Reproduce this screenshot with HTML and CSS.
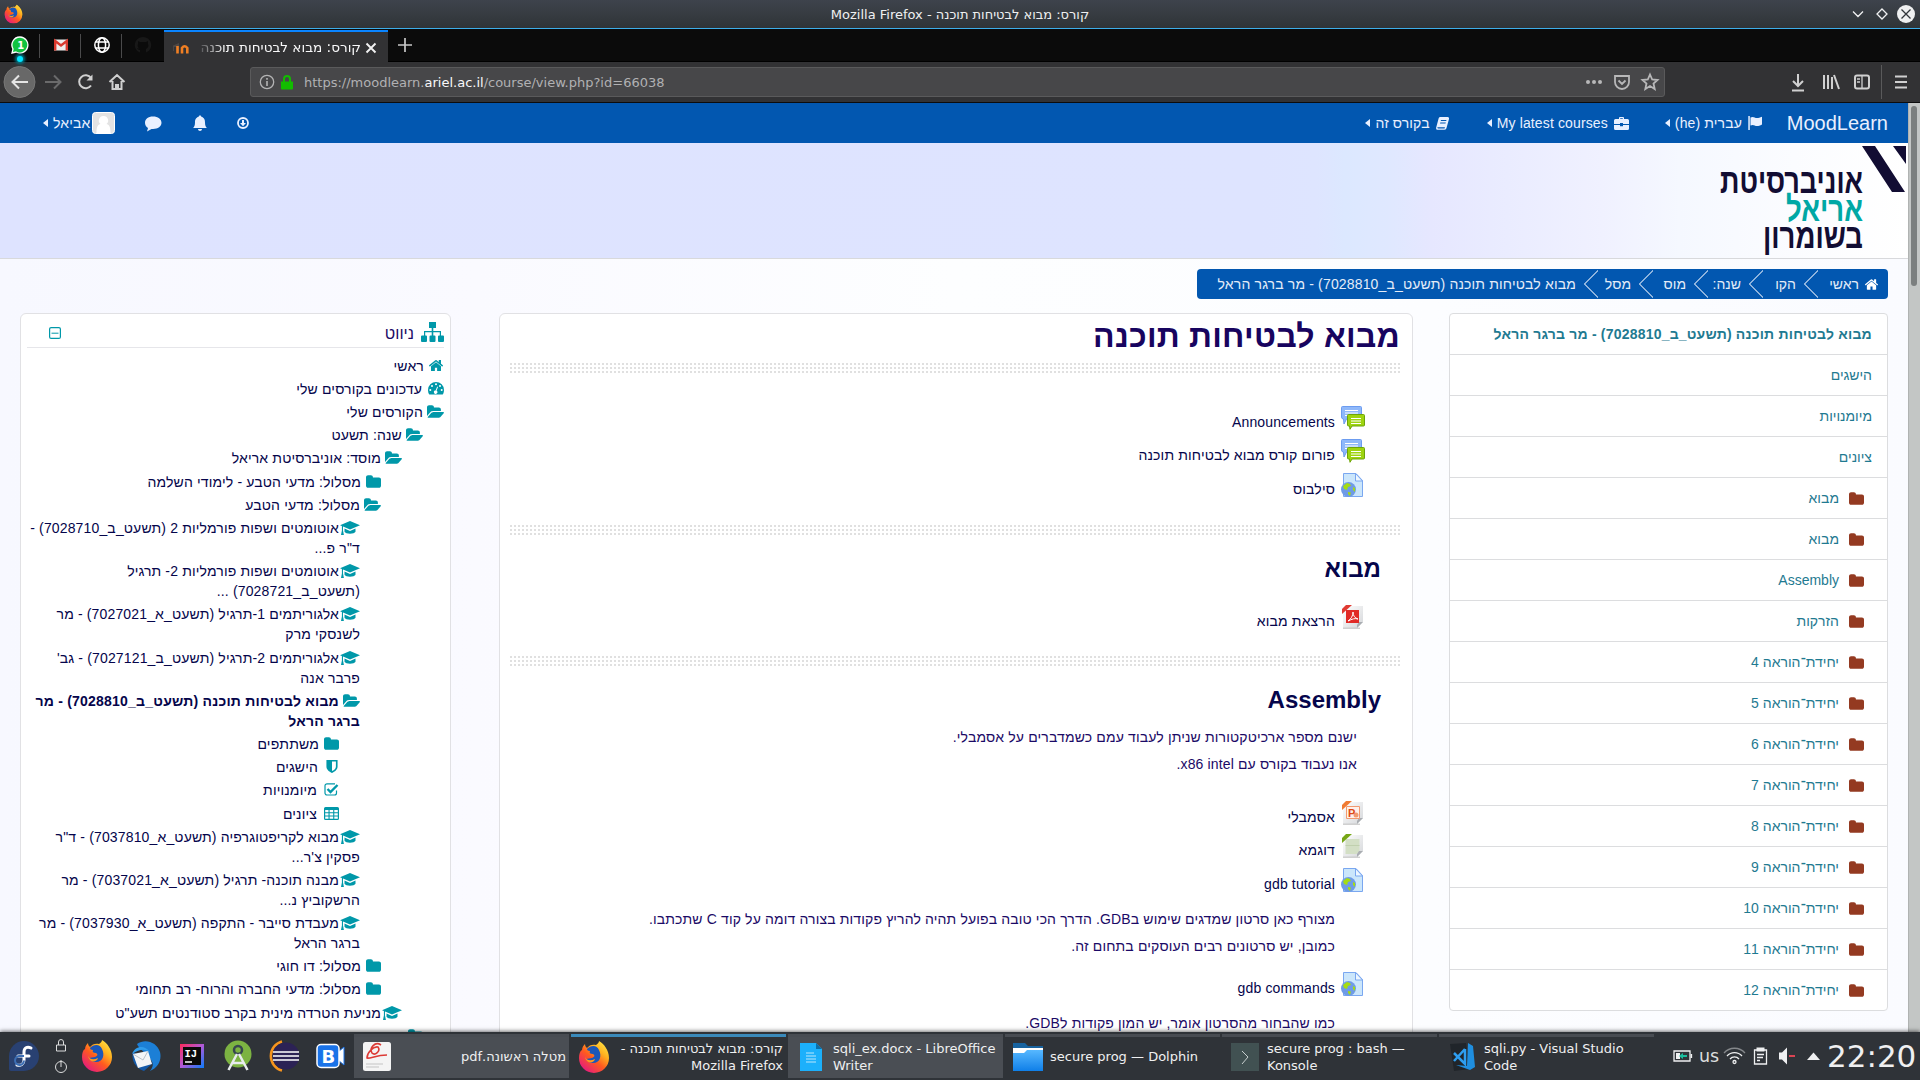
FILE: index.html
```html
<!DOCTYPE html>
<html lang="he">
<head>
<meta charset="utf-8">
<title>קורס: מבוא לבטיחות תוכנה</title>
<link rel="stylesheet" href="styles.css">
</head>
<body>
<svg class="sprite" aria-hidden="true">
  <defs>
    <linearGradient id="ffx" x1="1" y1="0" x2="0.2" y2="1"><stop offset="0" stop-color="#fff44f"/><stop offset=".35" stop-color="#ffb01f"/><stop offset=".6" stop-color="#ff5a1f"/><stop offset="1" stop-color="#e31587"/></linearGradient>
    <linearGradient id="doc" x1="0" y1="0" x2="1" y2="1"><stop offset="0" stop-color="#fff"/><stop offset="1" stop-color="#d5d7da"/></linearGradient>
    <linearGradient id="fold" x1="0" y1="0" x2="0" y2="1"><stop offset="0" stop-color="#57b8ff"/><stop offset="1" stop-color="#0f7fe8"/></linearGradient>
    <linearGradient id="ij" x1="0" y1="0" x2="1" y2="1"><stop offset="0" stop-color="#fe2857"/><stop offset=".5" stop-color="#b05ad8"/><stop offset="1" stop-color="#087cfa"/></linearGradient>
  </defs>
  <symbol id="folder" viewBox="64 128 1664 1408"><path d="M1728 608v704q0 92-66 158t-158 66h-1216q-92 0-158-66t-66-158v-960q0-92 66-158t158-66h320q92 0 158 66t66 158v32h672q92 0 158 66t66 158z"/></symbol>
  <symbol id="open" viewBox="0 128 1880 1408"><path d="M1879 952q0 31-31 66l-336 396q-43 51-120.500 86.500t-143.500 35.500h-1088q-34 0-60.500-13t-26.500-43q0-31 31-66l336-396q43-51 120.500-86.500t143.500-35.500h1088q34 0 60.500 13t26.500 43zm-343-344v160h-832q-94 0-197 47.500t-164 119.500l-337 396-5 6q0-4-.5-12.500t-.5-12.500v-960q0-92 66-158t158-66h320q92 0 158 66t66 158v32h544q92 0 158 66t66 158z"/></symbol>
  <symbol id="home" viewBox="90 250 1612 1290"><path d="M1472 992v480q0 26-19 45t-45 19h-384v-384h-256v384h-384q-26 0-45-19t-19-45v-480q0-1 .5-3t.5-3l575-474 575 474q1 2 1 6zm223-69l-62 74q-8 9-21 11h-3q-13 0-21-7l-692-577-692 577q-12 8-24 7-13-2-21-11l-62-74q-8-10-7-23.500t11-21.500l719-599q32-26 76-26t76 26l244 204v-195q0-14 9-23t23-9h192q14 0 23 9t9 23v408l219 182q10 8 11 21.500t-7 23.500z"/></symbol>
  <symbol id="cap" viewBox="0 0 20 14"><path d="M0 4.300 10 0l10 4.300-10 4.200-7-2.900v3.900l.9 4.500H1l.9-4.500V5.100z"/><path d="M4.500 7.600 10 9.900l5.500-2.300v3.200c-1 2.600-10 2.600-11 0z"/></symbol>
  <symbol id="dash" viewBox="0 0 16 13"><path fill-rule="evenodd" d="M8 0a8 8 0 0 1 8 8c0 1.800-.5 3.500-1.300 4.600H1.300A8 8 0 0 1 0 8a8 8 0 0 1 8-8zM8 1.300a1 1 0 1 0 0 2 1 1 0 0 0 0-2zM4 3a1 1 0 1 0 0 2 1 1 0 0 0 0-2zm8 0a1 1 0 1 0 0 2 1 1 0 0 0 0-2zM2.300 7a1 1 0 1 0 0 2 1 1 0 0 0 0-2zm11.400 0a1 1 0 1 0 0 2 1 1 0 0 0 0-2zM9.200 4.600 7.600 8.400a1.700 1.700 0 1 0 1 .3l1.400-3.800z"/></symbol>
  <symbol id="site" viewBox="0 0 23 20"><path d="M8 0h7v6h-2.700v3H20v4.500h2a1 1 0 0 1 1 1V19a1 1 0 0 1-1 1h-4a1 1 0 0 1-1-1v-4.500a1 1 0 0 1 1-1h.8V10.200h-6.500v3.300h1.200a1 1 0 0 1 1 1V19a1 1 0 0 1-1 1h-4a1 1 0 0 1-1-1v-4.500a1 1 0 0 1 1-1h1.200v-3.300H4.200v3.300H5a1 1 0 0 1 1 1V19a1 1 0 0 1-1 1H1a1 1 0 0 1-1-1v-4.500a1 1 0 0 1 1-1h2V9h7.700V6H8z"/></symbol>
  <symbol id="shield" viewBox="0 0 12 14"><path fill-rule="evenodd" d="M0 0h12v7c0 3.500-3 5.500-6 7-3-1.500-6-3.500-6-7zm6 1.700v10.200c2.500-1.300 4.200-2.700 4.200-5V1.700z"/></symbol>
  <symbol id="check" viewBox="0 0 15 13"><path d="M11 .8H3A2 2 0 0 0 1 2.800v7A2 2 0 0 0 3 12h7.500a2 2 0 0 0 2-2V7.500" fill="none" stroke="currentColor" stroke-width="1.200"/><path d="m3.500 6 3 3 7-7" fill="none" stroke="currentColor" stroke-width="2.400"/></symbol>
  <symbol id="table" viewBox="0 0 15 13"><path fill-rule="evenodd" d="M1.500 0h12A1.500 1.500 0 0 1 15 1.500v10a1.500 1.500 0 0 1-1.500 1.500h-12A1.500 1.500 0 0 1 0 11.500v-10A1.500 1.500 0 0 1 1.500 0zM1.200 3v2.300h3.300V3zm4.400 0v2.300h3.600V3zm4.700 0v2.300h3.500V3zM1.200 6.300v2.200h3.300V6.300zm4.400 0v2.200h3.600V6.300zm4.700 0v2.200h3.500V6.300zM1.200 9.500v2.300h3.300V9.500zm4.400 0v2.300h3.600V9.500zm4.700 0v2.300h3.500V9.500z"/></symbol>
  <symbol id="forum" viewBox="0 0 24 24"><path d="M1.500.5h18a1 1 0 0 1 1 1V12a1 1 0 0 1-1 1H5.500l-2.500 5-.5-5a2 2 0 0 1-2-2V1.500a1 1 0 0 1 1-1z" fill="#8fb8fa" stroke="#6c9cf0"/><path d="M4 4.500h13M4 7h13M4 9.500h5" stroke="#fff"/><path d="M7.500 8.500h15a1 1 0 0 1 1 1V19a1 1 0 0 1-1 1H11l-2 3.300L8.500 20h-1a1 1 0 0 1-1-1V9.500a1 1 0 0 1 1-1z" fill="#9ed410" stroke="#6da409"/><path d="M10 12.500h10M10 15h10M10 17.500h10" stroke="#fff" /></symbol>
  <symbol id="url" viewBox="0 0 24 24"><path d="M2.500.5H15l6.500 7v16h-19z" fill="#cbe6fb" stroke="#7aa7f0"/><path d="M14.500.5v7.500h7z" fill="#eef7ff" stroke="#7aa7f0"/><circle cx="7.500" cy="16.500" r="7.500" fill="#6f9be6"/><path d="M2 13l4-3 3 1 1 2-3 1-1 3-3-1zM7 19l3 .5-1 3.500-2-2zM12 14l2 1v4l-2-2z" fill="#a5dc12"/></symbol>
  <symbol id="pdf" viewBox="0 0 24 24"><path d="M2 1h20v16l-6 6H2z" fill="url(#doc)"/><path d="M2 23.200h17" stroke="#bbb"/><path d="M22 17l-6 6v-3l2-3z" fill="#aaadb2"/><path d="M1 9V4l4-4h6z" fill="#e03b33"/><path d="M5 5h13v13H5z" fill="#e12a26"/><path d="M7 16c3-2 5-5 5-9 0 4 2 6 5 7-3-1-6 0-10 2z" fill="none" stroke="#fff"/></symbol>
  <symbol id="xls" viewBox="0 0 24 24"><path d="M2 1h20v16l-6 6H2z" fill="url(#doc)"/><path d="M2 23.200h17" stroke="#bbb"/><path d="M4.500 5h14v12l-3 3h-11z" fill="#d3dfc5"/><path d="M4.500 11.500h14" stroke="#c0d0ae"/><path d="M22 17l-6 6v-3l2-3z" fill="#aaadb2"/><path d="M1 9V4l4-4h6z" fill="#76a616"/></symbol>
  <symbol id="firefox" viewBox="0 0 32 32"><path d="M4 9c0-3 2-5 3-6 0 2 1 3 2 4 2-3 6-4 9-3C20 3 21 1 21 0c5 3 10 9 10 17a15 15 0 0 1-30 0C1 13 2 10 4 9z" fill="url(#ffx)"/><path d="M9 8c4-4 10-4 12 1 3 6 1 13-6 13-4 0-6-2-7-4l6-1c3-1 3-3 1-4-3 0-4-1-3-3-2 0-3-1-3-2z" fill="#1b57b8"/><path d="M7 16c2 4 6 4 10 2-1 4-8 6-10-2z" fill="#ff9a1f"/></symbol>
</svg>

<header class="titlebar">
  <svg class="tb-app" viewBox="0 0 32 32"><use href="#firefox"/></svg>
  <span class="tb-title" dir="ltr"><bdi>Mozilla Firefox</bdi> - <bdi>קורס: מבוא לבטיחות תוכנה</bdi></span>
  <svg class="tb-btns" viewBox="0 0 72 28" fill="none" stroke="#eff0f1" stroke-width="1.300"><path d="m5 11.500 5 5 5-5M34 9l5 5-5 5-5-5z"/><circle cx="58" cy="14" r="9" fill="#eff0f1" stroke="none"/><path d="m53.500 9.500 9 9m0-9-9 9" stroke="#30353a"/></svg>
</header>

<div class="tabs">
  <div class="pin first"><svg viewBox="0 0 18 18"><path d="M9 1a8 8 0 1 1-4 15l-4 1 1-4A8 8 0 0 1 9 1z" fill="#10c340" stroke="#fff" stroke-width="1.300"/><text x="6.300" y="13" font-family="DejaVu Sans" font-weight="700" font-size="10" fill="#fff">1</text></svg><i class="notice"></i></div>
  <div class="pin"><svg viewBox="0 0 18 18"><path d="M2 3.500h14v11H2z" fill="#eee"/><path d="M3.200 14.500V5L9 9.500 14.800 5v9.500" fill="none" stroke="#d93a2f" stroke-width="2.400"/></svg></div>
  <div class="pin"><svg viewBox="0 0 18 18" fill="none" stroke="#fff" stroke-width="1.500"><circle cx="9" cy="9" r="7.200"/><ellipse cx="9" cy="9" rx="3.600" ry="7.200"/><path d="M2.500 6h13M2.500 12h13"/></svg></div>
  <div class="pin last"><svg viewBox="0 0 18 18"><path d="M9 1a8 8 0 0 0-3 15.500V14c-2 0-2-1-3-2 2 0 2 1 3 1-2-1-3-3-2-5V5l2 1h6l2-1v3c1 2 0 4-2 5v3.500A8 8 0 0 0 9 1z" fill="#181818"/></svg></div>
  <div class="tab">
    <svg class="fav" viewBox="0 0 16 16"><path d="M0 5.500 6 3v8H4V7H1v4H0z" fill="#4c4644"/><path d="M4.500 13.500V6M9 13.500V8q2.500-3.500 5.300 0v5.500" fill="none" stroke="#f07f23" stroke-width="2.600"/></svg>
    <span class="tab-title" dir="rtl">קורס: מבוא לבטיחות תוכנה</span>
    <svg class="tab-x" viewBox="0 0 12 12"><path d="m1.500 1.500 9 9m0-9-9 9" stroke="#f2f2f2" stroke-width="1.900"/></svg>
  </div>
  <svg class="plus" viewBox="0 0 14 14"><path d="M7 0v14M0 7h14" stroke="#c8c8c8" stroke-width="1.700"/></svg>
</div>

<div class="toolbar">
  <svg class="nav-ic" viewBox="0 0 130 40" fill="none" stroke="#d0d0d0" stroke-width="2"><circle cx="19.500" cy="20" r="15.500" fill="#686868" stroke="#777" stroke-width="1"/><path d="M28 20H13m6-6.500L12.500 20l6.500 6.500" stroke="#e4e4e4"/><path d="M45 20h15m-6-6.500 6.500 6.500-6.500 6.500" stroke="#6a6a6b"/><path d="M91 23.500a6.500 6.500 0 1 1 0-7.500"/><path d="M92.500 12.500v6h-6z" fill="#d0d0d0" stroke="none"/><path d="m109.500 20 7.500-7 7.500 7M112.500 19v8h9v-8M116 27v-4h2v4"/></svg>
  <div class="urlbar">
    <svg class="info" viewBox="0 0 16 16" fill="none" stroke="#b4b4b5"><circle cx="8" cy="8" r="6.700" stroke-width="1.300"/><path d="M8 7v5M8 4v1.700" stroke-width="1.600"/></svg>
    <svg class="lock" viewBox="0 0 12 15"><path d="M3 7V4a3 3 0 0 1 6 0v3" fill="none" stroke="#12bc00" stroke-width="2"/><path d="M0 6.500h12v7a1 1 0 0 1-1 1H1a1 1 0 0 1-1-1z" fill="#12bc00"/></svg>
    <span class="url">https://moodlearn.<b>ariel.ac.il</b>/course/view.php?id=66038</span>
    <svg class="url-ic" viewBox="0 0 80 20" fill="none" stroke="#b8b8b9" stroke-width="1.800"><g fill="#b8b8b9" stroke="none"><circle cx="8" cy="10" r="2"/><circle cx="14" cy="10" r="2"/><circle cx="20" cy="10" r="2"/></g><path d="M35 4h14v6a7 7 0 0 1-14 0zM38.500 8.500 42 12l3.500-3.500"/><path d="m70 2.500 2.200 5 5.300.5-4 3.500 1.200 5.500-4.700-3-4.700 3 1.200-5.500-4-3.500 5.300-.5z"/></svg>
  </div>
  <svg class="tool-ic" viewBox="0 0 130 40" fill="none" stroke="#d0d0d0" stroke-width="2"><path d="M18 12v12m-5-5 5 5 5-5M12 28.500h12"/><path d="M44 13v14M48 13v14M52 15v12M54 13l5 14"/><rect x="75" y="13.500" width="14" height="13" rx="2"/><path d="M82 14v12M77 17h3m-3 3h3" stroke-width="1.300"/><path d="M101.500 3v34" stroke="#5a5a5b" stroke-width="1"/><path d="M115 14.500h12m-12 5.500h12m-12 5.500h12"/></svg>
</div>

<div class="viewport">
<div class="page" dir="rtl">
  <nav class="navbar">
    <a class="brand">MoodLearn</a>
    <a class="menu m1"><svg width="14" height="14" viewBox="0 0 14 14"><path d="M.3 0h1.500v14H.3zM2.500 1.500c3-1.500 4 .5 6.500.5 1.500 0 3-.5 5-1.300v7.800c-2 1-3.500 1.500-5 1.500C6.500 10 5.500 8 2.500 9.500z"/></svg>עברית (he)<i></i></a>
    <a class="menu m2"><svg width="15" height="13" viewBox="0 0 15 13"><path fill-rule="evenodd" d="M5 2V1a1 1 0 0 1 1-1h3a1 1 0 0 1 1 1v1h3.500A1.500 1.500 0 0 1 15 3.500V7H9V6H6v1H0V3.500A1.500 1.500 0 0 1 1.500 2zm1.200 0h2.600V1.200H6.200zM0 8h6v1.300h3V8h6v3.500a1.500 1.500 0 0 1-1.500 1.500h-12A1.500 1.500 0 0 1 0 11.500z"/></svg>My latest courses<i></i></a>
    <a class="menu m3"><svg width="13" height="13" viewBox="0 0 13 13"><path fill-rule="evenodd" d="M4 0h7.500A1.500 1.500 0 0 1 13 2l-2.500 9a2 2 0 0 1-2 1.800H1.700C.4 12.800-.2 11.500.2 10.500L2.600 1.500A2 2 0 0 1 4 0zM5 3l-.3 1h5.500l.3-1zm-.7 2.500L4 6.500h5.500l.3-1zM1.500 10.300c-.3.800.1 1.200.7 1.200h6.300l.5-1.200z"/></svg>בקורס זה<i></i></a>
    <span class="grow"></span>
    <svg class="user-ic" width="106" height="18" viewBox="0 0 106 18" fill="#e9f0ff"><path d="M9 2.500c5 0 8.500 2.700 8.500 6.300S14 15 9 15H7.500L3 17.500l1-3.500C2 12.800 1 11 1 8.800 1 5.200 4 2.500 9 2.500z"/><path d="M56 1.500c.8 0 1.300.5 1.300 1.300 3 .8 3.700 3.200 3.700 5.700 0 3 .8 4.500 2 5.500H49c1.200-1 2-2.500 2-5.500 0-2.500.7-4.900 3.700-5.700 0-.8.500-1.300 1.300-1.300zM54 15h4c0 2.500-4 2.500-4 0z"/><circle cx="99" cy="9" r="5" fill="none" stroke="#e9f0ff" stroke-width="1.800"/><path d="M98 6h2v3h2l-3 3.200L96 9h2z"/></svg>
    <a class="menu user"><svg width="23" height="22" viewBox="0 0 23 22"><rect x=".5" y=".5" width="22" height="21" rx="3" fill="#e3e3e3" stroke="#fff"/><path d="M11.500 4a4.500 4.500 0 0 1 3 8c2.500.8 4 2 4 9h-14c0-7 1.500-8.200 4-9a4.500 4.500 0 0 1 3-8z" fill="#fff"/></svg>אביאל<i></i></a>
  </nav>

  <div class="banner">
    <svg class="logo" width="190" height="112" viewBox="0 0 190 112"><path d="M146 1h13l30 46h-13zM177 1h13v18z" fill="#120d33"/><g class="logo-text" direction="rtl"><text x="147" y="48" textLength="143" lengthAdjust="spacingAndGlyphs">אוניברסיטת</text><text class="teal" x="147" y="75.500" textLength="77" lengthAdjust="spacingAndGlyphs">אריאל</text><text x="147" y="103" textLength="100" lengthAdjust="spacingAndGlyphs">בשומרון</text></g></svg>
  </div>

  <div class="crumbs">
    <span class="c0"><svg width="13" height="11" fill="#fff"><use href="#home"/></svg>ראשי</span>
    <span class="c">הקו</span><span class="c">שנה:</span><span class="c">מוס</span><span class="c">מסל</span><span class="c wide">מבוא לבטיחות תוכנה (תשעט_ב_7028810) - מר ברגר הראל</span>
  </div>

  <div class="cols">
    <aside class="menu-box">
      <div class="mi b">מבוא לבטיחות תוכנה (תשעט_ב_7028810) - מר ברגר הראל</div>
      <div class="mi">הישגים</div><div class="mi">מיומנויות</div><div class="mi">ציונים</div>
      <div class="mi f"><svg><use href="#folder"/></svg>מבוא</div>
      <div class="mi f"><svg><use href="#folder"/></svg>מבוא</div>
      <div class="mi f"><svg><use href="#folder"/></svg>Assembly</div>
      <div class="mi f"><svg><use href="#folder"/></svg>הזרקות</div>
      <div class="mi f"><svg><use href="#folder"/></svg>יחידת־הוראה 4</div>
      <div class="mi f"><svg><use href="#folder"/></svg>יחידת־הוראה 5</div>
      <div class="mi f"><svg><use href="#folder"/></svg>יחידת־הוראה 6</div>
      <div class="mi f"><svg><use href="#folder"/></svg>יחידת־הוראה 7</div>
      <div class="mi f"><svg><use href="#folder"/></svg>יחידת־הוראה 8</div>
      <div class="mi f"><svg><use href="#folder"/></svg>יחידת־הוראה 9</div>
      <div class="mi f"><svg><use href="#folder"/></svg>יחידת־הוראה 10</div>
      <div class="mi f"><svg><use href="#folder"/></svg>יחידת־הוראה 11</div>
      <div class="mi f"><svg><use href="#folder"/></svg>יחידת־הוראה 12</div>
    </aside>

    <main class="content">
      <h1>מבוא לבטיחות תוכנה</h1>
      <div class="dots"></div>
      <section class="s1">
        <div class="act"><svg><use href="#forum"/></svg><a>Announcements</a></div>
        <div class="act"><svg><use href="#forum"/></svg><a>פורום קורס מבוא לבטיחות תוכנה</a></div>
        <div class="act"><svg><use href="#url"/></svg><a>סילבוס</a></div>
      </section>
      <div class="dots"></div>
      <section class="s2">
        <h3>מבוא</h3>
        <div class="act"><svg><use href="#pdf"/></svg><a>הרצאת מבוא</a></div>
      </section>
      <div class="dots"></div>
      <section class="s3">
        <h3>Assembly</h3>
        <p class="sum">ישנם מספר ארכיטקטורות שניתן לעבוד עמם כשמדברים על אסמבלי.<br>אנו נעבוד בקורס עם x86 intel.</p>
        <div class="act"><svg viewBox="0 0 24 24"><path d="M2 1h20v16l-6 6H2z" fill="url(#doc)"/><path d="M2 23.200h17" stroke="#bbb"/><path d="M22 17l-6 6v-3l2-3z" fill="#aaadb2"/><path d="M1 9V4l4-4h6z" fill="#f07b33"/><path d="M5.500 5.500h13v12h-13z" fill="#fff1ea" stroke="#f29a70"/><circle cx="15" cy="14" r="2.500" fill="#f29a70"/><text x="7" y="15.500" font-family="Liberation Sans" font-weight="700" font-size="11" fill="#dd4a16">P</text></svg><a>אסמבלי</a></div>
        <div class="act"><svg><use href="#xls"/></svg><a>דוגמא</a></div>
        <div class="act"><svg><use href="#url"/></svg><a>gdb tutorial</a></div>
        <p class="note">מצורף כאן סרטון שמדגים שימוש בGDB. הדרך הכי טובה בפועל תהיה להריץ פקודות בצורה דומה על קוד C שתכתבו.<br>כמובן, יש סרטונים רבים העוסקים בתחום זה.</p>
        <div class="act"><svg><use href="#url"/></svg><a>gdb commands</a></div>
        <p class="note last">כמו שהבחור מהסרטון אומר, יש המון פקודות לGDB.</p>
      </section>
    </main>

    <aside class="tree-box">
      <div class="tree-head"><svg class="site"><use href="#site"/></svg><span>ניווט</span><svg class="minus" viewBox="0 0 12 12" fill="none" stroke="#0098a9"><rect x=".6" y=".6" width="10.800" height="10.800" rx="1.500" stroke-width="1.200"/><path d="M2.500 6.200h7"/></svg></div>
      <ul class="tree">
        <li class="l0"><svg class="i-home"><use href="#home"/></svg>ראשי</li>
        <li class="l0"><svg class="i-dash"><use href="#dash"/></svg>עדכונים בקורסים שלי</li>
        <li class="l0"><svg class="i-open"><use href="#open"/></svg>הקורסים שלי</li>
        <li class="l1"><svg class="i-open"><use href="#open"/></svg>שנה: תשעט</li>
        <li class="l2"><svg class="i-open"><use href="#open"/></svg>מוסד: אוניברסיטת אריאל</li>
        <li class="l3"><svg class="i-fold"><use href="#folder"/></svg>מסלול: מדעי הטבע - לימודי השלמה</li>
        <li class="l3"><svg class="i-open"><use href="#open"/></svg>מסלול: מדעי הטבע</li>
        <li class="l4"><svg class="i-cap"><use href="#cap"/></svg>אוטומטים ושפות פורמליות 2 (תשעט_ב_7028710) -<br>ד"ר פ...</li>
        <li class="l4"><svg class="i-cap"><use href="#cap"/></svg>אוטומטים ושפות פורמליות 2- תרגיל<br>(תשעט_ב_7028721) ...</li>
        <li class="l4"><svg class="i-cap"><use href="#cap"/></svg>אלגוריתמים 1-תרגיל (תשעט_א_7027021) - מר<br>לשנסקי מרק</li>
        <li class="l4"><svg class="i-cap"><use href="#cap"/></svg>אלגוריתמים 2-תרגיל (תשעט_ב_7027121) - גב'<br>פרבר אנה</li>
        <li class="l4 cur"><svg class="i-open"><use href="#open"/></svg>מבוא לבטיחות תוכנה (תשעט_ב_7028810) - מר<br>ברגר הראל</li>
        <li class="l5"><svg class="i-fold"><use href="#folder"/></svg>משתתפים</li>
        <li class="l5"><svg class="i-shield"><use href="#shield"/></svg>הישגים</li>
        <li class="l5"><svg class="i-box"><use href="#check"/></svg>מיומנויות</li>
        <li class="l5"><svg class="i-box"><use href="#table"/></svg>ציונים</li>
        <li class="l4"><svg class="i-cap"><use href="#cap"/></svg>מבוא לקריפטוגרפיה (תשעט_א_7037810) - ד"ר<br>פסקין צ'ר...</li>
        <li class="l4"><svg class="i-cap"><use href="#cap"/></svg>מבנה תוכנה- תרגיל (תשעט_א_7037021) - מר<br>הרשקוביץ נ...</li>
        <li class="l4"><svg class="i-cap"><use href="#cap"/></svg>מעבדת סייבר - התקפה (תשעט_א_7037930) - מר<br>ברגר הראל</li>
        <li class="l3"><svg class="i-fold"><use href="#folder"/></svg>מסלול: דו חוגי</li>
        <li class="l3"><svg class="i-fold"><use href="#folder"/></svg>מסלול: מדעי החברה והרוח- רב תחומי</li>
        <li class="l2"><svg class="i-cap"><use href="#cap"/></svg>מניעת הטרדה מינית בקרב סטודנטים תשע"ט</li>
        <li class="l1"><svg class="i-fold"><use href="#folder"/></svg></li>
      </ul>
    </aside>
  </div>
</div>
<div class="scrollbar"><i></i></div>
</div>

<footer class="taskbar">
  <div class="launch">
    <svg class="fedora" viewBox="0 0 32 32"><path d="M16 1a15 15 0 1 1 0 30H3a2 2 0 0 1-2-2V16A15 15 0 0 1 16 1z" fill="#294172"/><path d="M23 8c-4-2-7 0-7 4v8c0 4-3 6-7 5M10 16h11" fill="none" stroke="#fff" stroke-width="3" stroke-linecap="round"/><path d="M16 16H12a4.500 4.500 0 1 0 4 4.500" fill="none" stroke="#3c6eb4" stroke-width="2"/></svg>
    <svg class="lockpow" viewBox="0 0 14 36" fill="none" stroke="#dcdddd"><path d="M2.500 7h9v6h-9zM4.500 7V4a2.500 2.500 0 0 1 5 0v3"/><circle cx="7" cy="29" r="5.500"/><path d="M7 22v7"/></svg>
    <svg class="ff" viewBox="0 0 32 32"><use href="#firefox"/></svg>
    <svg viewBox="0 0 32 32"><path d="M7 4c8-6 20-2 23 8 2 8-2 16-10 19 4-5 3-8 1-11L8 6z" fill="#1c7fd6"/><path d="M3 12C1 20 5 28 14 31l9-8z" fill="#1459a8"/><path d="m3 14 15-3 4 13-14 4z" fill="#f3f5f7"/><path d="m3 14 10 6 5-9" fill="none" stroke="#b9c2cb"/><path d="M2 14C5 6 14 4 20 12 14 8 8 10 2 14z" fill="#2f9ceb"/></svg>
    <svg viewBox="0 0 32 32"><path d="M4 4h24v24H4z" fill="url(#ij)"/><path d="M7 7h18v18H7z" fill="#0a0a0a"/><path d="M9 22h7" stroke="#fff" stroke-width="1.500"/><text x="8.500" y="17" font-family="Liberation Mono" font-weight="700" font-size="10.500" fill="#fff">IJ</text></svg>
    <svg viewBox="0 0 32 32"><circle cx="16" cy="14" r="13.500" fill="#7cb342"/><circle cx="16" cy="10" r="4" fill="none" stroke="#37474f" stroke-width="2.500"/><path d="M15 14 6.500 30M17 14l8.500 16M10 23h12" stroke="#e8ecee" stroke-width="2.500"/></svg>
    <svg viewBox="0 0 32 32"><path d="M14 1.500a15 15 0 0 0 0 29" fill="none" stroke="#f7941e" stroke-width="2.500"/><circle cx="18" cy="16" r="13.500" fill="#2c2255"/><path d="M5 12h26M5 16h26M5 20h26" stroke="#fff" stroke-width="1.700"/></svg>
    <svg viewBox="0 0 32 32"><path d="m24 12 6-5v18l-6-5z" fill="#fff" stroke="#1a73e8"/><rect x="3" y="4.500" width="22" height="23" rx="4" fill="#1a73e8" stroke="#fff" stroke-width="1.500"/><text x="7.500" y="22.500" font-family="DejaVu Sans" font-weight="700" font-size="18" fill="#fff">B</text></svg>
  </div>
  <div class="task on r"><svg viewBox="0 0 32 32"><rect x="2" y="1" width="28" height="29" rx="2.500" fill="#f4f4f4"/><path d="M20 4c-6-4-12 3-9 8 3 3 9-2 6-6C12 5 6 12 6 17c3 1 9-3 20-3" fill="none" stroke="#dc3a35" stroke-width="1.600"/><path d="M5 23h17M5 26h13" stroke="#d4d4d4" stroke-width="1.500"/></svg><span dir="rtl">מטלה ראשונה.pdf</span></div>
  <div class="task act-t r"><svg viewBox="0 0 32 32"><use href="#firefox"/></svg><span dir="rtl">קורס: מבוא לבטיחות תוכנה -<br>Mozilla Firefox</span></div>
  <div class="task on"><svg viewBox="0 0 32 32"><path d="M5 2h16l6 6v22H5z" fill="#1cb0fb"/><path d="M21 2l6 6h-6z" fill="#0a6ea8"/><path d="M11 12h8M11 15h10M11 18h10M11 21h10" stroke="#85d4fb" stroke-width="1.500"/></svg><span>sqli_ex.docx - LibreOffice<br>Writer</span></div>
  <div class="task"><svg viewBox="0 0 32 32"><path d="M1 2h12l3 3h15v5H1z" fill="#18639f"/><path d="M1 7h30v5H1z" fill="#fff"/><path d="M1 12h11l3-3h16v21H1z" fill="url(#fold)"/></svg><span>secure prog — Dolphin</span></div>
  <div class="task"><svg viewBox="0 0 32 32"><path d="M2 2h28v28H2z" fill="#415152"/><path d="m13 10 6 6-6 7" fill="none" stroke="#c8cfcf"/></svg><span>secure prog : bash —<br>Konsole</span></div>
  <div class="task"><svg viewBox="0 0 32 32"><path d="m4 3 16-1 4 26-16 2z" fill="#20252a"/><path d="m22 2 5 3 2 21-5 3-14-5 11 1z" fill="#1f8fe0"/><path d="M19 8v15L8 12M8 20 19 8" fill="none" stroke="#2e9ef0" stroke-width="2.500"/></svg><span>sqli.py - Visual Studio<br>Code</span></div>
  <div class="tray">
    <svg width="152" height="24" viewBox="0 0 152 24" fill="none" stroke="#eff0f1" stroke-width="1.300"><path d="M3 7h16v10H3zM20.500 10v4"/><path d="M5 9h4v6H5z" fill="#eff0f1" stroke="none"/><path d="m8 12 4-3v2h4v2h-4v2z" fill="#1abc9c" stroke="none"/><text x="28" y="18" font-family="DejaVu Sans" font-size="17.500" fill="#dcdddd" stroke="none">us</text><g transform="translate(-3 0)"><path d="M56 9a14 14 0 0 1 21 0" stroke="#85888b"/><path d="M59 12a10 10 0 0 1 15 0M62 15a6 6 0 0 1 9 0"/><circle cx="66.500" cy="18" r="1.500"/></g><path d="M83.500 6h12v14h-12zM86 10.500h7M86 13.500h6M86 16.500h3"/><path d="M85.500 3.500h8v4h-8z" fill="#eff0f1" stroke="none"/><path d="M108 8.500h3l5-5v17l-5-5h-3z" fill="#eff0f1" stroke="none"/><path d="M118 12h6" stroke="#da4453" stroke-width="2"/><path d="m136 16 6.500-7.500L149 16z" fill="#eff0f1" stroke="none"/></svg>
    <span class="clock">22:20</span>
  </div>
</footer>
</body>
</html>
```
FILE: styles.css
```css
* { box-sizing: border-box; }
body {
  margin: 0;
  width: 1920px;
  height: 1080px;
  overflow: hidden;
  display: flex;
  flex-direction: column;
  font-family: "Liberation Sans", "Noto Sans", sans-serif;
  font-size: 14px;
}
svg { display: block; flex: none; direction: ltr; letter-spacing: 0; }
.sprite { position: absolute; width: 0; height: 0; }

/* window chrome */
.titlebar, .tabs, .toolbar, .taskbar { font-family: "DejaVu Sans", sans-serif; font-size: 13px; }
.titlebar {
  height: 29px;
  flex: none;
  display: grid;
  grid-template-columns: 200px 1fr 200px;
  align-items: center;
  background: linear-gradient(#3e434c, #2f3437);
  border-bottom: 1px solid #3daee9;
  color: #eff0f1;
}
.tb-app { width: 19px; height: 20px; margin-left: 4px; }
.tb-title { text-align: center; }
.tb-btns { width: 72px; height: 28px; justify-self: end; }
.tabs {
  height: 33px;
  flex: none;
  display: flex;
  background: #0b0b0b;
  border-bottom: 1px solid #000;
}
.pin {
  position: relative;
  width: 41px;
  display: flex;
  align-items: center;
  justify-content: center;
}
.pin.first { width: 40px; }
.pin.last { width: 42px; }
.pin::after { content: ""; position: absolute; right: 0; top: 5px; height: 24px; width: 1px; background: #4a4a4b; }
.pin.last::after { display: none; }
.pin svg { width: 18px; height: 18px; }
.notice {
  position: absolute;
  left: 17px;
  bottom: -1px;
  width: 6px;
  height: 6px;
  border-radius: 50%;
  background: #00e5ff;
  box-shadow: 0 0 3px 2px #007a8a;
}
.tab {
  width: 224px;
  height: 33px;
  margin-top: 1px;
  border-top: 2px solid #0a84ff;
  background: #323234;
  color: #f9f9fa;
  display: flex;
  align-items: center;
  padding-left: 9px;
  font-size: 13.600px;
}
.fav { width: 16px; height: 16px; }
.tab-title {
  width: 172px;
  padding-bottom: 1px;
  text-align: right;
  white-space: nowrap;
  -webkit-mask-image: linear-gradient(to right, transparent 6px, #000 36px);
  mask-image: linear-gradient(to right, transparent 6px, #000 36px);
}
.tab-x { width: 12px; height: 12px; margin-left: 4px; }
.plus { width: 14px; height: 14px; margin: 9px 0 0 10px; }
.toolbar {
  height: 41px;
  flex: none;
  display: flex;
  align-items: center;
  background: #323234;
  border-bottom: 1px solid #0c0c0d;
}
.nav-ic { width: 130px; height: 40px; }
.urlbar {
  width: 1415px;
  height: 30px;
  margin-left: 120px;
  border: 1px solid #5a5a5b;
  border-radius: 3px;
  background: #474749;
  display: flex;
  align-items: center;
}
.info { width: 16px; height: 16px; margin-left: 8px; }
.lock { width: 12px; height: 15px; margin-left: 6px; }
.url { margin-left: 11px; color: #b1b1b3; flex: 1; }
.url b { font-weight: 400; color: #f9f9fa; }
.url-ic { width: 80px; height: 20px; margin-right: 4px; }
.tool-ic { width: 130px; height: 40px; margin-left: 115px; }

/* page */
.viewport { height: 929px; flex: none; display: flex; overflow: hidden; }
.page {
  width: 1908px;
  background: linear-gradient(90deg, #f7f8ff 0, #fafaff 25%, #fdfeff 50%, #fcfdff 75%, #fafbff 100%);
}
.scrollbar { width: 12px; background: #c3c6c5; border-left: 1px solid #b0b3b2; padding: 3px 3px 0 2px; }
.scrollbar i { display: block; width: 6px; height: 180px; border-radius: 3px; background: #7b7f7f; }
.navbar {
  height: 40px;
  background: #0257b0;
  color: #e9f0ff;
  display: flex;
  align-items: center;
  padding: 0 20px 0 43px;
}
.brand { font-size: 20px; width: 101px; }
.menu { display: flex; align-items: center; fill: #e9f0ff; white-space: nowrap; letter-spacing: .13px; }
.menu svg { margin-left: 6px; }
.menu i { border: 4.500px solid transparent; border-left: 0; border-right: 5px solid #e9f0ff; margin-right: 5px; }
.m1 { margin-right: 25px; }
.m2 { margin-right: 36px; }
.m3 { margin-right: 38px; }
.grow { flex: 1; }
.user-ic { margin-left: 29px; }
.user svg { margin-left: 2px; }
.banner {
  height: 116px;
  border-bottom: 1px solid #d8d9dc;
  background: linear-gradient(90deg, #dee3ff 0, #dee4ff 66%, #dee5ff 69%, #dce8ff 70.500%, #e0e8ff 73%, #e6e7ff 75%, #eaecff 79%, #f0f1ff 84%, #f5f8ff 88%, #fbfcff 94%, #fff 100%);
  display: flex;
  padding: 2px 2px 0 0;
}
.logo-text {
  font-family: "Liberation Sans", "Noto Sans", sans-serif;
  font-size: 35px;
  font-weight: 700;
  fill: #120d33;
}
.logo-text .teal { fill: #00a8a5; }
.crumbs {
  width: 691px;
  height: 30px;
  margin: 10px 20px 0 0;
  border-radius: 4px;
  background: #0257b0;
  color: #e4ecf8;
  display: flex;
  line-height: 30px;
}
.c0 { width: 70px; padding-right: 10px; display: flex; align-items: center; gap: 6px; }
.c { width: 55px; display: flex; white-space: nowrap; }
.c::before {
  content: "";
  width: 14px;
  height: 28px;
  margin: 1px 0 0 8px;
  background:
    linear-gradient(to bottom right, transparent 48%, #8db3dd 48%, #8db3dd 54%, transparent 54%) 0 0 / 14px 14px no-repeat,
    linear-gradient(to top right, transparent 48%, #8db3dd 48%, #8db3dd 54%, transparent 54%) 0 14px / 14px 14px no-repeat;
}
.wide { width: 400px; letter-spacing: .16px; }
.cols { display: flex; margin: 14px 20px 0 20px; align-items: flex-start; }
.menu-box { width: 439px; border: 1px solid #dcdddf; border-radius: 4px; background: #fff; color: #1f7a91; }
.mi { height: 41px; padding-right: 15px; border-bottom: 1px solid #dcdddf; display: flex; align-items: center; }
.mi:last-child { border-bottom: 0; height: 40px; }
.mi.b { font-weight: 700; letter-spacing: .2px; }
.mi.f { padding-right: 23px; }
.mi svg { width: 15px; height: 13px; margin-left: 10px; fill: #943a21; }

.content {
  width: 914px;
  height: 760px;
  margin-right: 36px;
  padding: 0 12px 0 10px;
  border: 1px solid #e1e1e4;
  border-radius: 6px;
  background: #fff;
  color: #1b0a66;
  letter-spacing: .14px;
}
h1 { margin: 0; height: 49px; line-height: 45px; font-size: 32px; font-weight: 700; color: #18045f; letter-spacing: .22px; }
.dots {
  height: 10px;
  background-image: conic-gradient(from 270deg at 2px 2px, #e0e0e0 25%, transparent 0);
  background-size: 4px 4px;
}
.s1 { height: 152px; padding-top: 28px; }
.s2 { height: 121px; }
h3 { margin: 0; height: 65px; line-height: 67px; padding-right: 19px; font-size: 24px; color: #05054b; letter-spacing: 0; }
.s3 h3 { height: 58px; }
.act { height: 33.400px; padding: 5px 35px 0 0; display: flex; gap: 6px; color: #05054b; }
.act svg { width: 24px; height: 24px; }
.act a { line-height: 33px; }
p { margin: 0; line-height: 27px; white-space: nowrap; }
.sum { padding-right: 43px; margin-bottom: 18px; }
.note { padding-right: 65px; margin: 10px 0 6.500px; }

.tree-box {
  width: 431px;
  height: 760px;
  margin-right: auto;
  padding: 0 6px;
  border: 1px solid #e1e1e4;
  border-radius: 6px;
  background: #fff;
  color: #05054b;
}
.tree-head {
  height: 34px;
  border-bottom: 1px solid #e6e6ea;
  display: flex;
  align-items: center;
  font-size: 16px;
  color: #1b0a66;
}
.tree-head span { flex: 1; padding: 7px 7px 0 0; }
.site { width: 23px; height: 20px; margin-top: 2px; fill: #0098a9; }
.minus { width: 12px; height: 12px; margin: 5px 0 0 22px; }
.tree { list-style: none; margin: 0; padding: 7.700px 0 0; line-height: 20px; white-space: nowrap; letter-spacing: .15px; }
.tree li { margin-bottom: 3.190px; }
.tree svg { display: inline-block; vertical-align: -1px; height: 13px; fill: #0098a9; color: #0098a9; }
.l1 { padding-right: 21px; }
.l2 { padding-right: 42px; }
.l3 { padding-right: 63px; }
.l4 { padding-right: 84px; }
.l5 { padding-right: 105px; }
.cur { font-weight: 700; letter-spacing: .22px; }
.i-home { width: 14px; margin: 0 1px 0 5px; }
.i-dash { width: 16px; margin-left: 6px; }
.i-open { width: 17px; margin-left: 4px; }
.i-fold { width: 15px; margin-left: 5px; }
.tree .i-cap { width: 20px; height: 14px; vertical-align: -2px; margin-left: 1px; }
.i-shield { width: 12px; margin: 0 1px 0 8px; }
.i-box { width: 15px; margin-left: 7px; }

/* desktop panel */
.taskbar {
  position: relative;
  height: 48px;
  flex: none;
  display: flex;
  background: #2f3338;
  color: #eff0f1;
  box-shadow: 0 -1px 4px rgba(0, 0, 0, .55);
  padding-top: 2px;
  line-height: 17px;
}
.launch { width: 354px; display: flex; align-items: center; padding: 0 0 2px 8px; }
.launch svg { width: 32px; height: 32px; margin-right: 14px; }
.launch .lockpow { width: 14px; height: 36px; margin-right: 13px; }
.launch .ff { margin-right: 17px; }
.task {
  width: 215px;
  height: 44px;
  margin-right: 2px;
  border-top: 3px solid #484c52;
  display: flex;
  align-items: center;
  padding: 0 3px 2px 7px;
  gap: 6px;
  white-space: nowrap;
}
.task svg { width: 32px; height: 32px; }
.task.on { background: #4a4e54; }
.task.act-t { border-top-color: #3a8abb; }
.task.r { gap: 0; }
.task.r span { flex: 1; text-align: right; }
.tray { display: flex; align-items: center; margin-left: 15px; padding-bottom: 2px; }
.clock { font-size: 31px; line-height: 44px; margin-left: 4px; }
```
